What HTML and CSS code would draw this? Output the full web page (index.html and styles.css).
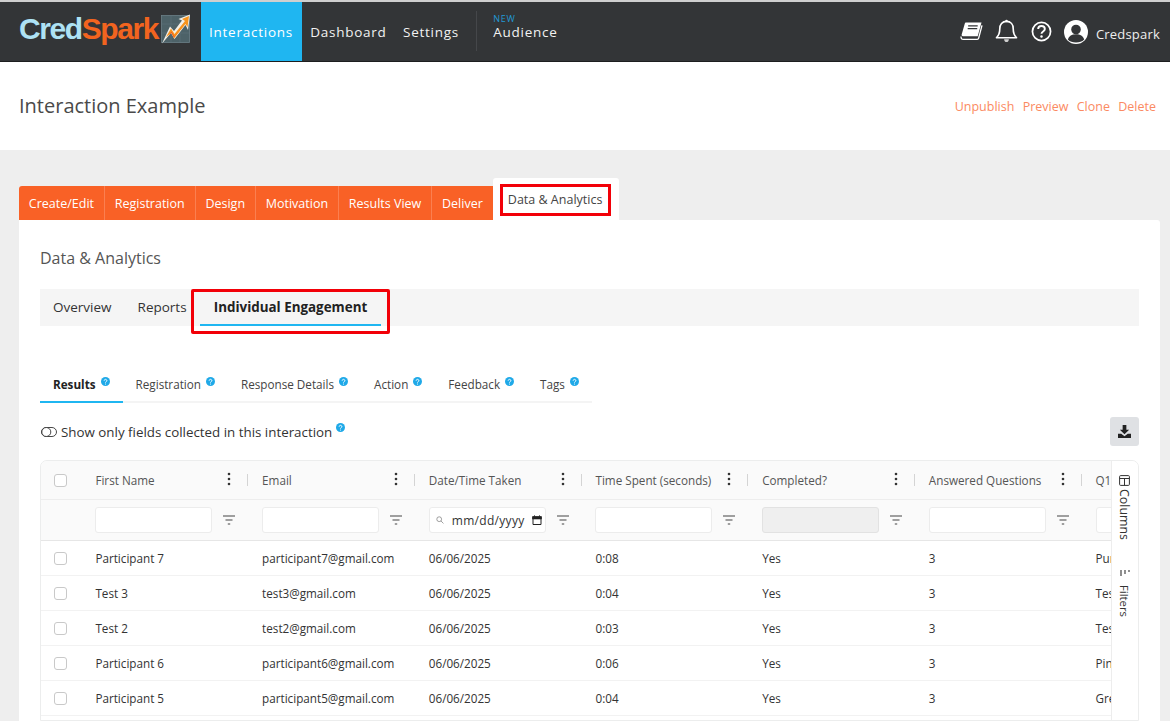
FILE: index.html
```html
<!DOCTYPE html>
<html lang="en">
<head>
<meta charset="utf-8">
<title>Interaction Example</title>
<link rel="stylesheet" href="styles.css">
</head>
<body>
<svg class="defs" width="0" height="0" aria-hidden="true">
  <defs>
    <symbol id="help" viewBox="0 0 10 10">
      <circle cx="5" cy="5" r="5" fill="#1fa9e8"/>
      <path d="M3.5 4a1.5 1.4 0 1 1 2.3 1.2c-.5.3-.8.5-.8 1" fill="none" stroke="#fff" stroke-width="1.1"/>
      <circle cx="5" cy="7.8" r=".65" fill="#fff"/>
    </symbol>
    <symbol id="filter" viewBox="0 0 12 10">
      <path d="M0 1h12M2.5 5h7M4.8 9h2.4" fill="none" stroke="#444" stroke-width="1.2"/>
    </symbol>
    <symbol id="dots" viewBox="0 0 4 14">
      <circle cx="2" cy="2" r="1.3" fill="#333"/>
      <circle cx="2" cy="7" r="1.3" fill="#333"/>
      <circle cx="2" cy="12" r="1.3" fill="#333"/>
    </symbol>
  </defs>
</svg>

<header class="topbar">
  <div class="logo">
    <span class="logo-text"><span class="logo-cred">Cred</span><span class="logo-spark">Spark</span></span>
    <svg class="logo-mark" viewBox="0 0 30 30" aria-hidden="true">
      <rect x=".5" y="1.500" width="28" height="27" fill="#4d6268" stroke="#6b8188" stroke-width=".8"/>
      <path d="M1 10h27M1 19h27M10 2v26M19 2v26" stroke="#5b7279" stroke-width=".6"/>
      <path d="M1 29.500 9 12.500l4 4.500L21 6.500l-3.500-1.500L29 .5l-2 15.500-2.500-5L13.500 25l-3.500-6z" fill="#f3efe6"/>
      <path d="M5 23 10 14.500 13.500 20 24 7 21 5 28 2 26.500 13 24.500 10 13 24.500 10.500 19z" fill="#f7941d"/>
      <path d="M8 21 10.500 17.500 13.500 22.500 23 11 13 23.500 10.500 19z" fill="#ee5a23"/>
    </svg>
  </div>
  <nav class="mainnav">
    <a class="mainnav-item mainnav-item-active">Interactions</a>
    <a class="mainnav-item">Dashboard</a>
    <a class="mainnav-item">Settings</a>
    <span class="mainnav-divider"></span>
    <a class="mainnav-item mainnav-item-new"><span class="new-tag">NEW</span>Audience</a>
  </nav>
  <div class="userbar">
    <svg class="ico-book" viewBox="0 0 24 22" aria-hidden="true">
      <path d="M6 1.500h16.500L18.500 16H3c-1 0-1.500-.8-1.300-1.800L5 2.500C5.100 1.900 5.500 1.500 6 1.500z" fill="#fff"/>
      <path d="M8.500 5h10M8 8h10" stroke="#333537" stroke-width="1.300"/>
      <path d="M23 4.500 19.500 18c-.2.8-.7 1.300-1.500 1.300H3.500c-1.800 0-2.800-1.300-2.300-3" fill="none" stroke="#fff" stroke-width="1.400"/>
    </svg>
    <svg class="ico-bell" viewBox="0 0 24 26" aria-hidden="true">
      <path d="M12 2.500c-4.500 0-7 3.300-7 7.500 0 5-1.500 7.500-3.500 9.500h21c-2-2-3.500-4.500-3.500-9.500 0-4.200-2.500-7.500-7-7.500z" fill="none" stroke="#fff" stroke-width="1.700" stroke-linejoin="round"/>
      <path d="M9.500 21h5c0 1.500-1 3-2.500 3s-2.500-1.500-2.500-3z" fill="#cfcfcf"/>
      <circle cx="12" cy="2" r="1.300" fill="#fff"/>
    </svg>
    <svg class="ico-q" viewBox="0 0 22 22" aria-hidden="true">
      <circle cx="11" cy="11" r="9.500" fill="none" stroke="#fff" stroke-width="1.800"/>
      <path d="M7.500 8.500c0-2 1.500-3.200 3.500-3.200s3.500 1.200 3.500 3c0 2.700-3.500 2.500-3.500 5" fill="none" stroke="#fff" stroke-width="2"/>
      <circle cx="11" cy="16.200" r="1.300" fill="#fff"/>
    </svg>
    <svg class="ico-user" viewBox="0 0 24 24" aria-hidden="true">
      <circle cx="12" cy="12" r="12" fill="#fff"/>
      <circle cx="12" cy="9.500" r="4.800" fill="#333537"/>
      <path d="M3.800 19.500c1-3.500 4-5.200 8.200-5.200s7.200 1.700 8.200 5.200c-2 2.200-4.900 3-8.200 3s-6.200-.8-8.200-3z" fill="#333537"/>
    </svg>
    <span class="username">Credspark</span>
  </div>
</header>

<section class="titleband">
  <h1 class="pagetitle">Interaction Example</h1>
  <div class="pageactions">
    <a>Unpublish</a><a>Preview</a><a>Clone</a><a>Delete</a>
  </div>
</section>

<main class="content">
  <div class="steptabs">
    <a class="step">Create/Edit</a>
    <a class="step">Registration</a>
    <a class="step">Design</a>
    <a class="step">Motivation</a>
    <a class="step">Results View</a>
    <a class="step step-last">Deliver</a>
    <div class="step-active"><span class="step-active-label">Data &amp; Analytics</span></div>
  </div>

  <section class="card">
    <h2 class="cardtitle">Data &amp; Analytics</h2>

    <div class="subnav">
      <a class="subnav-item sub-overview">Overview</a>
      <a class="subnav-item sub-reports">Reports</a>
      <div class="subnav-current"><span class="subnav-current-label">Individual Engagement</span></div>
    </div>

    <div class="datatabs">
      <a class="datatab datatab-active">Results<svg class="help"><use href="#help"/></svg></a>
      <a class="datatab">Registration<svg class="help"><use href="#help"/></svg></a>
      <a class="datatab">Response Details<svg class="help"><use href="#help"/></svg></a>
      <a class="datatab">Action<svg class="help"><use href="#help"/></svg></a>
      <a class="datatab">Feedback<svg class="help"><use href="#help"/></svg></a>
      <a class="datatab">Tags<svg class="help"><use href="#help"/></svg></a>
    </div>

    <div class="toolrow">
      <div class="toggle">
        <svg class="ico-toggle" viewBox="0 0 16 10" aria-hidden="true">
          <rect x=".5" y=".5" width="15" height="9" rx="4.500" fill="none" stroke="#333" stroke-width=".9"/>
          <circle cx="5.300" cy="5" r="4.500" fill="#fff" stroke="#333" stroke-width=".9"/>
        </svg>
        <span>Show only fields collected in this interaction</span>
        <svg class="help help-toggle"><use href="#help"/></svg>
      </div>
      <button class="download" type="button" aria-label="Download">
        <svg viewBox="0 0 14 14" aria-hidden="true">
          <path d="M5 0h4v5h3L7 10 2 5h3z" fill="#222"/>
          <path d="M0 9.500h3.500L7 12l3.500-2.500H14V14H0z" fill="#222"/>
        </svg>
      </button>
    </div>

    <div class="grid">
      <div class="grid-main">
        <div class="row row-head">
          <div class="cell-check"><span class="check"></span></div>
          <div class="hcell"><span class="hlabel">First Name</span><svg class="dots"><use href="#dots"/></svg><i class="hsep"></i></div>
          <div class="hcell"><span class="hlabel">Email</span><svg class="dots"><use href="#dots"/></svg><i class="hsep"></i></div>
          <div class="hcell"><span class="hlabel">Date/Time Taken</span><svg class="dots"><use href="#dots"/></svg><i class="hsep"></i></div>
          <div class="hcell"><span class="hlabel">Time Spent (seconds)</span><svg class="dots"><use href="#dots"/></svg><i class="hsep"></i></div>
          <div class="hcell"><span class="hlabel">Completed?</span><svg class="dots"><use href="#dots"/></svg><i class="hsep"></i></div>
          <div class="hcell"><span class="hlabel">Answered Questions</span><svg class="dots"><use href="#dots"/></svg><i class="hsep"></i></div>
          <div class="hcell"><span class="hlabel">Q1</span></div>
        </div>
        <div class="row row-filter">
          <div class="cell-check"></div>
          <div class="fcell"><input class="finput" type="text" aria-label="First Name filter"><svg class="ffilter"><use href="#filter"/></svg></div>
          <div class="fcell"><input class="finput" type="text" aria-label="Email filter"><svg class="ffilter"><use href="#filter"/></svg></div>
          <div class="fcell">
            <div class="finput fdate">
              <svg class="ico-search" viewBox="0 0 10 10" aria-hidden="true"><circle cx="4" cy="4" r="3" fill="none" stroke="#888" stroke-width="1"/><path d="M6.300 6.300 9.300 9.300" stroke="#888" stroke-width="1"/></svg>
              <span class="fdate-text">mm/dd/yyyy</span>
              <svg class="ico-cal" viewBox="0 0 10 10" aria-hidden="true"><path d="M1 2h8v7.500H1z" fill="none" stroke="#222" stroke-width="1"/><path d="M.5 1.500h9V4h-9zM2.500 0v2M7.500 0v2" fill="#222" stroke="#222" stroke-width=".6"/></svg>
            </div>
            <svg class="ffilter"><use href="#filter"/></svg>
          </div>
          <div class="fcell"><input class="finput" type="text" aria-label="Time filter"><svg class="ffilter"><use href="#filter"/></svg></div>
          <div class="fcell"><input class="finput finput-off" type="text" disabled aria-label="Completed filter"><svg class="ffilter"><use href="#filter"/></svg></div>
          <div class="fcell"><input class="finput" type="text" aria-label="Answered filter"><svg class="ffilter"><use href="#filter"/></svg></div>
          <div class="fcell"><input class="finput" type="text" aria-label="Q1 filter"></div>
        </div>
        <div class="row row-data">
          <div class="cell-check"><span class="check"></span></div>
          <div class="dcell">Participant 7</div><div class="dcell">participant7@gmail.com</div><div class="dcell">06/06/2025</div><div class="dcell">0:08</div><div class="dcell">Yes</div><div class="dcell">3</div><div class="dcell">Purple</div>
        </div>
        <div class="row row-data">
          <div class="cell-check"><span class="check"></span></div>
          <div class="dcell">Test 3</div><div class="dcell">test3@gmail.com</div><div class="dcell">06/06/2025</div><div class="dcell">0:04</div><div class="dcell">Yes</div><div class="dcell">3</div><div class="dcell">Test</div>
        </div>
        <div class="row row-data">
          <div class="cell-check"><span class="check"></span></div>
          <div class="dcell">Test 2</div><div class="dcell">test2@gmail.com</div><div class="dcell">06/06/2025</div><div class="dcell">0:03</div><div class="dcell">Yes</div><div class="dcell">3</div><div class="dcell">Test</div>
        </div>
        <div class="row row-data">
          <div class="cell-check"><span class="check"></span></div>
          <div class="dcell">Participant 6</div><div class="dcell">participant6@gmail.com</div><div class="dcell">06/06/2025</div><div class="dcell">0:06</div><div class="dcell">Yes</div><div class="dcell">3</div><div class="dcell">Pink</div>
        </div>
        <div class="row row-data">
          <div class="cell-check"><span class="check"></span></div>
          <div class="dcell">Participant 5</div><div class="dcell">participant5@gmail.com</div><div class="dcell">06/06/2025</div><div class="dcell">0:04</div><div class="dcell">Yes</div><div class="dcell">3</div><div class="dcell">Green</div>
        </div>
      </div>
      <aside class="sidepanel">
        <div class="sidebtn sidebtn-columns">
          <svg class="ico-columns" viewBox="0 0 11 11" aria-hidden="true"><rect x=".6" y=".6" width="9.800" height="9.800" rx="1" fill="none" stroke="#333" stroke-width="1"/><path d="M.6 3.500h9.800M5.500 3.500v7" stroke="#333" stroke-width="1"/></svg>
          <span>Columns</span>
        </div>
        <div class="sidebtn sidebtn-filters">
          <svg class="ico-filters" viewBox="0 0 10 6" aria-hidden="true"><path d="M1 0v6M5 0v4M9 0v2" stroke="#333" stroke-width="1.100"/></svg>
          <span>Filters</span>
        </div>
      </aside>
    </div>
  </section>
</main>
</body>
</html>
```

FILE: styles.css
```css
* { box-sizing: border-box; }

html, body {
  margin: 0;
  height: 721px;
  overflow: hidden;
}

body {
  background: #eeeeee;
  color: #444;
  font-family: "Open Sans", "Liberation Sans", sans-serif;
  border-top: 2px solid #cfcfcf;
}

.defs { position: absolute; }

a { color: inherit; text-decoration: none; }

/* Top bar */
.topbar {
  display: flex;
  align-items: stretch;
  height: 60px;
  background: #333537;
  border-bottom: 1px solid #1d1e1f;
  color: #fff;
}

.logo {
  display: flex;
  align-items: center;
  width: 201px;
  padding-left: 19px;
  padding-bottom: 6px;
}

.logo-text {
  font-family: "Liberation Sans", Arial, sans-serif;
  font-weight: 700;
  font-size: 30px;
  letter-spacing: -1.4px;
  line-height: 1;
}
.logo-cred { color: #aee2f4; }
.logo-spark { color: #f2641f; }

.logo-mark {
  width: 30px;
  height: 30px;
  margin-left: 3px;
  flex: none;
}

.mainnav {
  display: flex;
  align-items: stretch;
}

.mainnav-item {
  display: flex;
  flex-direction: column;
  justify-content: center;
  padding: 1px 8.200px 0;
  font-size: 13.500px;
  letter-spacing: .75px;
  color: #f2f2f2;
}

.mainnav-item-active {
  width: 101px;
  padding: 1px 0 0 8px;
  background: #1fb6f1;
  color: #fff;
}

.mainnav-divider {
  width: 1px;
  margin: 9px 16px 10px 9px;
  background: #45474a;
}

.mainnav-item-new {
  padding-left: 0;
  padding-bottom: 10px;
  line-height: 15px;
}

.new-tag {
  margin-bottom: 2px;
  font-size: 9px;
  line-height: 9px;
  letter-spacing: .8px;
  color: #2299d4;
}

.userbar {
  display: flex;
  align-items: center;
  margin-left: auto;
  padding-right: 10px;
}

.ico-book { width: 23px; height: 21px; margin-right: 12px; }
.ico-bell { width: 23px; height: 25px; margin-right: 13px; }
.ico-q { width: 21px; height: 21px; margin-right: 12px; }
.ico-user { width: 24px; height: 24px; margin-right: 8px; }

.username {
  font-size: 13px;
  letter-spacing: .2px;
  padding-top: 5px;
  color: #eee;
}

/* Title */
.titleband {
  display: flex;
  align-items: center;
  justify-content: space-between;
  height: 88px;
  padding: 0 14px 2px 19px;
  background: #fff;
}

.pagetitle {
  margin: 0;
  font-size: 20px;
  font-weight: 400;
  color: #4a4a4a;
}

.pageactions {
  display: flex;
  gap: 8.300px;
  font-size: 12.500px;
  color: #fb8a62;
  padding-top: 2px;
}

/* Step tabs */
.content {
  padding: 28px 10px 0 19px;
}

.steptabs {
  display: flex;
  align-items: flex-end;
  height: 42px;
}

.step {
  display: flex;
  align-items: center;
  height: 34px;
  padding: 1px 9.850px 0;
  background: #f96126;
  border-right: 1px solid #fb7f50;
  color: #fff;
  font-size: 12.500px;
  white-space: nowrap;
}
.step:first-child { border-radius: 3px 0 0 0; }
.step-last { border-right: 0; }

.step-active {
  height: 42px;
  padding: 6px 8px 0 7px;
  background: #fff;
  border-radius: 3px 3px 0 0;
}

.step-active-label {
  display: block;
  width: 111px;
  height: 32px;
  border: 3px solid #f20008;
  font-size: 12.500px;
  line-height: 25px;
  text-align: center;
  color: #444;
  white-space: nowrap;
}

/* Card */
.card {
  height: 501px;
  padding: 27px 21px 0;
  background: #fff;
  border-radius: 0 3px 0 0;
}

.cardtitle {
  margin: 0 0 19px;
  font-size: 16px;
  line-height: 23px;
  font-weight: 400;
  color: #555;
}

.subnav {
  position: relative;
  display: flex;
  align-items: center;
  height: 37px;
  padding-bottom: 2px;
  background: #f5f5f5;
  font-size: 13.500px;
  color: #333;
}

.subnav-item { white-space: nowrap; }
.sub-overview { margin-left: 13px; }
.sub-reports { margin-left: 26px; }

.subnav-current {
  position: absolute;
  left: 151px;
  top: 0;
  width: 199px;
  height: 45px;
  border: 3px solid #f20008;
  border-radius: 2px;
  padding: 6px 6px 0;
}

.subnav-current-label {
  display: block;
  height: 28px;
  border-bottom: 2px solid #1fb6f1;
  text-align: center;
  font-weight: 700;
  font-size: 13.400px;
  line-height: 19px;
  color: #222;
  white-space: nowrap;
}

/* Data tabs */
.datatabs {
  display: flex;
  width: 552px;
  height: 36px;
  margin-top: 41px;
  border-bottom: 2px solid #f4f4f4;
}

.datatab {
  display: flex;
  align-items: flex-start;
  height: 36px;
  padding: 8px 13px 0;
  font-size: 11.700px;
  line-height: 18px;
  color: #444;
  white-space: nowrap;
}

.datatab-active {
  font-weight: 700;
  color: #222;
  border-bottom: 2px solid #1fb6f1;
}

.help {
  width: 9px;
  height: 9px;
  margin: 2px 0 0 5px;
  flex: none;
}

/* Toolbar */
.toolrow {
  display: flex;
  align-items: center;
  justify-content: space-between;
  height: 29px;
  margin-top: 14px;
}

.toggle {
  display: flex;
  align-items: center;
  font-size: 13.350px;
  color: #333;
}

.ico-toggle {
  width: 16px;
  height: 10px;
  margin: 1px 4px 0 1px;
}

.help-toggle {
  width: 9px;
  height: 9px;
  margin: -8px 0 0 4px;
}

.download {
  display: flex;
  align-items: center;
  justify-content: center;
  width: 29px;
  height: 29px;
  padding: 0;
  background: #dfe1e4;
  border: 0;
  border-radius: 3px;
}
.download svg { width: 13px; height: 13px; }

/* Grid */
.grid {
  display: flex;
  height: 261px;
  margin-top: 14px;
  border: 1px solid #eceded;
  border-radius: 7px 7px 0 0;
  overflow: hidden;
}

.grid-main {
  flex: 1;
  min-width: 0;
  overflow: hidden;
}

.row {
  display: grid;
  grid-template-columns: 54.400px repeat(7, 166.700px);
  width: 1222px;
  align-items: center;
  border-bottom: 1px solid #ededed;
}

.row-head { height: 39px; background: #fafafa; }
.row-filter { height: 41px; background: #fafafa; border-bottom-color: #e6e6e6; }
.row-data { height: 35px; padding-bottom: 1px; border-bottom-color: #f2f2f2; }
.row-data .cell-check { padding-top: 2px; }

.cell-check {
  display: flex;
  padding-left: 13px;
}

.check {
  width: 13px;
  height: 13px;
  background: #fff;
  border: 1px solid #c9c9c9;
  border-radius: 3px;
}

.hcell {
  display: flex;
  align-items: center;
  height: 100%;
  font-size: 11.700px;
  color: #555;
  white-space: nowrap;
}

.dots {
  width: 4px;
  height: 14px;
  margin-left: auto;
  margin-right: 16px;
  flex: none;
  margin-top: -2px;
}

.hsep {
  display: block;
  width: 1px;
  height: 12px;
  margin-right: 13.700px;
  background: #d4d4d4;
}

.hlabel { flex: none; }

.fcell {
  display: flex;
  align-items: center;
  height: 100%;
}

.finput {
  width: 117px;
  height: 26px;
  flex: none;
  padding: 0;
  background: #fff;
  border: 1px solid #ececec;
  border-radius: 3px;
}

.finput-off { background: #efefef; border-color: #e2e2e2; }

.fdate {
  display: flex;
  align-items: center;
  padding: 0 3px 0 6px;
  font-size: 12px;
  color: #333;
}

.ico-search { width: 8px; height: 8px; flex: none; }
.fdate-text { margin-left: 8px; letter-spacing: .3px; white-space: nowrap; }
.ico-cal { width: 10px; height: 10px; margin-left: auto; flex: none; }

.ffilter {
  width: 12px;
  height: 10px;
  margin-left: 11px;
  flex: none;
}

.dcell {
  font-size: 11.700px;
  color: #333;
  white-space: nowrap;
}

.sidepanel {
  flex: none;
  display: flex;
  flex-direction: column;
  align-items: center;
  width: 27px;
  padding-right: 1px;
  background: #fff;
  border-left: 1px solid #ededed;
  font-size: 12.400px;
  color: #333;
}

.sidebtn {
  display: flex;
  flex-direction: column;
  align-items: center;
}
.sidebtn span { writing-mode: vertical-rl; white-space: nowrap; }
.ico-columns { width: 11px; height: 11px; flex: none; }
.ico-filters { width: 10px; height: 6px; flex: none; }
.sidebtn-columns { margin-top: 14px; }
.sidebtn-columns span { margin-top: 3px; }
.sidebtn-filters { margin-top: 30px; font-size: 11.300px; }
.sidebtn-filters span { margin-top: 9px; }
```
